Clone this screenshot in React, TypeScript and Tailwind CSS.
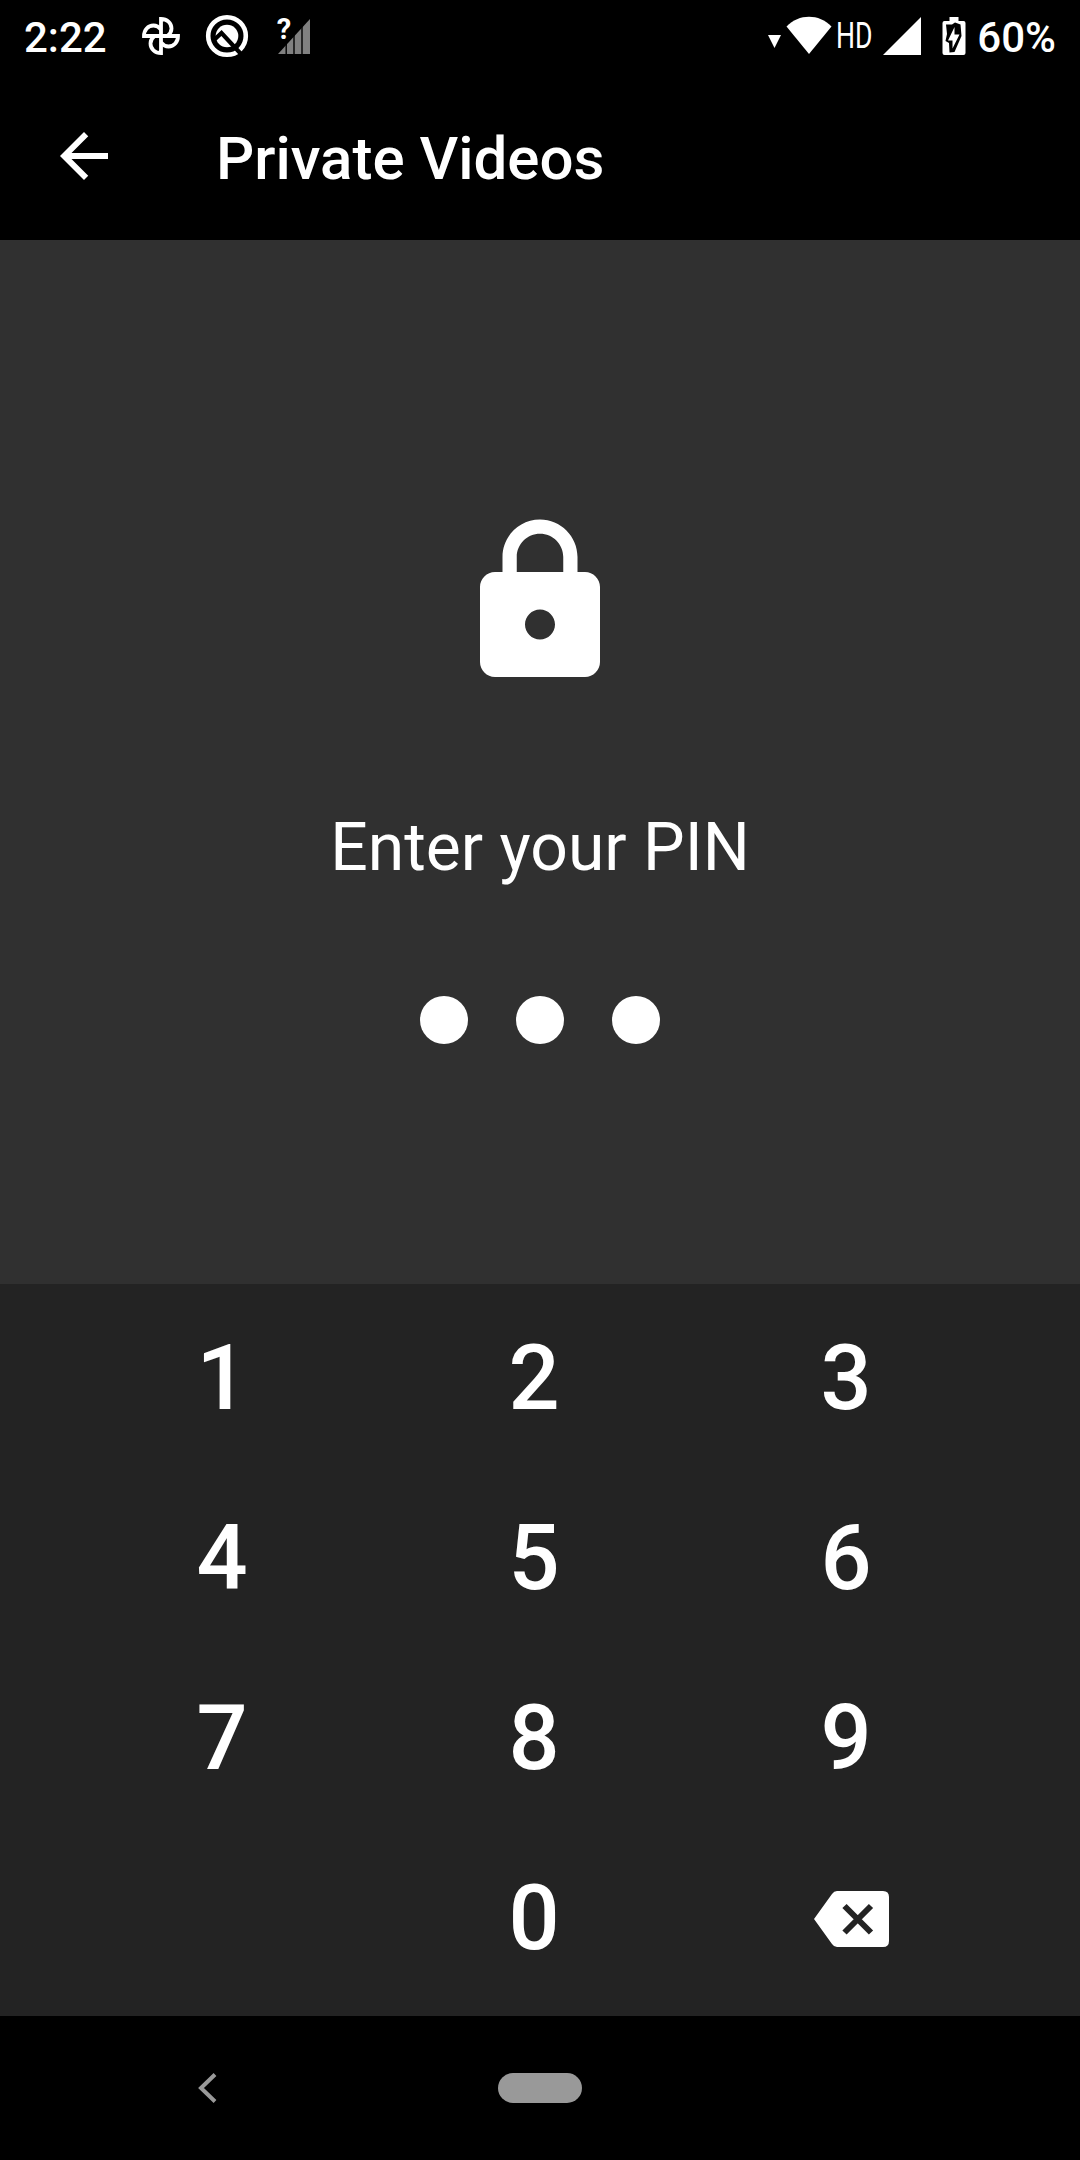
import React, { useState } from 'react';
import { MdArrowBack, MdLock } from 'react-icons/md';

const keys = ['1', '2', '3', '4', '5', '6', '7', '8', '9', '', '0', 'back'];

function PinwheelIcon() {
  return (
    <svg className="ml-[34px] h-[40px] w-[40px]" viewBox="0 0 40 40" fill="none" stroke="#fff" strokeWidth="3.8">
      {[0, 90, 180, 270].map((angle) => (
        <path key={angle} transform={`rotate(${angle} 20 20)`} d="M20 22V3C26 3 30.500 7 30.500 12.500C30.500 15.500 29 18 26.500 20" />
      ))}
    </svg>
  );
}

function CompassIcon() {
  return (
    <svg className="ml-[24px] h-[44px] w-[44px]" viewBox="0 0 44 44" fill="none">
      <circle cx="22" cy="22" r="18.8" stroke="#fff" strokeWidth="4.6" />
      <circle cx="22" cy="22" r="11.3" fill="#fff" />
      <path d="M9 26L16.500 19L36 40" stroke="#000" strokeWidth="4.2" />
    </svg>
  );
}

function NoSimIcon() {
  return (
    <div className="relative ml-[28px] h-[40px] w-[35px]">
      <svg className="h-[40px] w-[35px]" viewBox="0 0 35 40">
        <path d="M1 38L33 3V38Z" fill="#808080" />
        <path d="M9.200 0V40M17 0V40M25 0V40" stroke="#000" strokeWidth="1.4" />
      </svg>
      <span className="absolute -top-[4px] left-0 text-[29px] leading-[34px] font-bold">?</span>
    </div>
  );
}

function StatusBar() {
  return (
    <div className="flex h-[72px] items-center bg-black pr-[24px] pl-[24px] text-[42px] font-medium">
      <span className="pt-[3px] leading-[72px]">2:22</span>
      <PinwheelIcon />
      <CompassIcon />
      <NoSimIcon />
      <svg className="ml-auto h-[40px] w-[66px]" viewBox="0 0 66 40" fill="#fff">
        <path d="M2 19H15L8.500 32Z" />
        <path d="M20.500 10.500C33 -2.500 53 -2.500 65.500 10.500L43 38Z" />
      </svg>
      <span className="ml-[4px] w-[36px] origin-left scale-x-[0.74] text-[36px] leading-[72px] font-normal">HD</span>
      <svg className="ml-[11px] h-[38px] w-[38px]" viewBox="0 0 38 38" fill="#fff">
        <path d="M38 0V38H0Z" />
      </svg>
      <svg className="ml-[21px] h-[40px] w-[24px]" viewBox="0 0 24 40">
        <path d="M7.500 1H16.500V5H21.500Q23.500 5 23.500 7V37Q23.500 39 21.500 39H2.500Q.5 39 .5 37V7Q.5 5 2.500 5H7.500Z" fill="#fff" />
        <path d="M4 8.500H10L13 6.500L18.500 8.500L19.500 20L12.500 36L7.500 36.500L7 27L3.500 25L5 18Z" fill="#000" />
        <path d="M12.500 11V18.500H17.500L10.500 32.500V24.500H6Z" fill="#fff" />
      </svg>
      <span className="ml-[11px] pt-[3px] leading-[72px]">60%</span>
    </div>
  );
}

function BackspaceIcon() {
  return (
    <svg className="ml-[11px] h-[58px] w-[76px]" viewBox="0 0 76 58">
      <path d="M23 1H69Q75 1 75 7V51Q75 57 69 57H23Q20 57 18 54L0 29L18 4Q20 1 23 1Z" fill="#fff" />
      <path d="M30.500 16L57 42.500M57 16L30.500 42.500" stroke="#232323" strokeWidth="6" />
    </svg>
  );
}

function App() {
  const [pin, setPin] = useState('123');

  const handleKey = (key: string) => {
    if (key === 'back') {
      setPin(pin.slice(0, -1));
    } else if (pin.length < 4) {
      setPin(pin + key);
    }
  };

  return (
    <div className="flex h-[2160px] w-[1080px] flex-col overflow-hidden bg-black font-[Roboto,sans-serif] text-white">
      <StatusBar />
      <header className="flex h-[168px] items-center bg-black pl-[48px]">
        <button>
          <MdArrowBack className="h-[72px] w-[72px]" />
        </button>
        <h1 className="ml-[96px] pt-[5px] text-[60px] leading-[72px] font-medium">Private Videos</h1>
      </header>

      <main className="flex flex-1 flex-col items-center bg-[#303030] pt-[272px]">
        <MdLock className="h-[180px] w-[180px]" />
        <p className="mt-[116px] text-[66px] leading-[80px]">Enter your PIN</p>
        <div className="mt-[108px] flex gap-12">
          {pin.split('').map((_, i) => (
            <span key={i} className="h-12 w-12 rounded-full bg-white" />
          ))}
        </div>
      </main>

      <div className="grid h-[732px] grid-cols-[312px_312px_312px] grid-rows-[180px_180px_180px_180px] bg-[#232323] pt-[5px] pl-[66px]">
        {keys.map((key, i) =>
          key === '' ? (
            <span key={i} />
          ) : (
            <button
              key={i}
              className="flex items-center justify-center text-[90px] leading-[106px] font-medium"
              onClick={() => handleKey(key)}
            >
              {key === 'back' ? <BackspaceIcon /> : key}
            </button>
          )
        )}
      </div>

      <nav className="flex h-[144px] items-center bg-black pl-[196px]">
        <svg className="h-[32px] w-[22px]" viewBox="0 0 22 32" fill="none">
          <path d="M19 2.500L5 16L19 29.500" stroke="#999" strokeWidth="4" />
        </svg>
        <span className="ml-[280px] h-[30px] w-[84px] rounded-full bg-[#999]" />
      </nav>
    </div>
  );
}

export default App;
